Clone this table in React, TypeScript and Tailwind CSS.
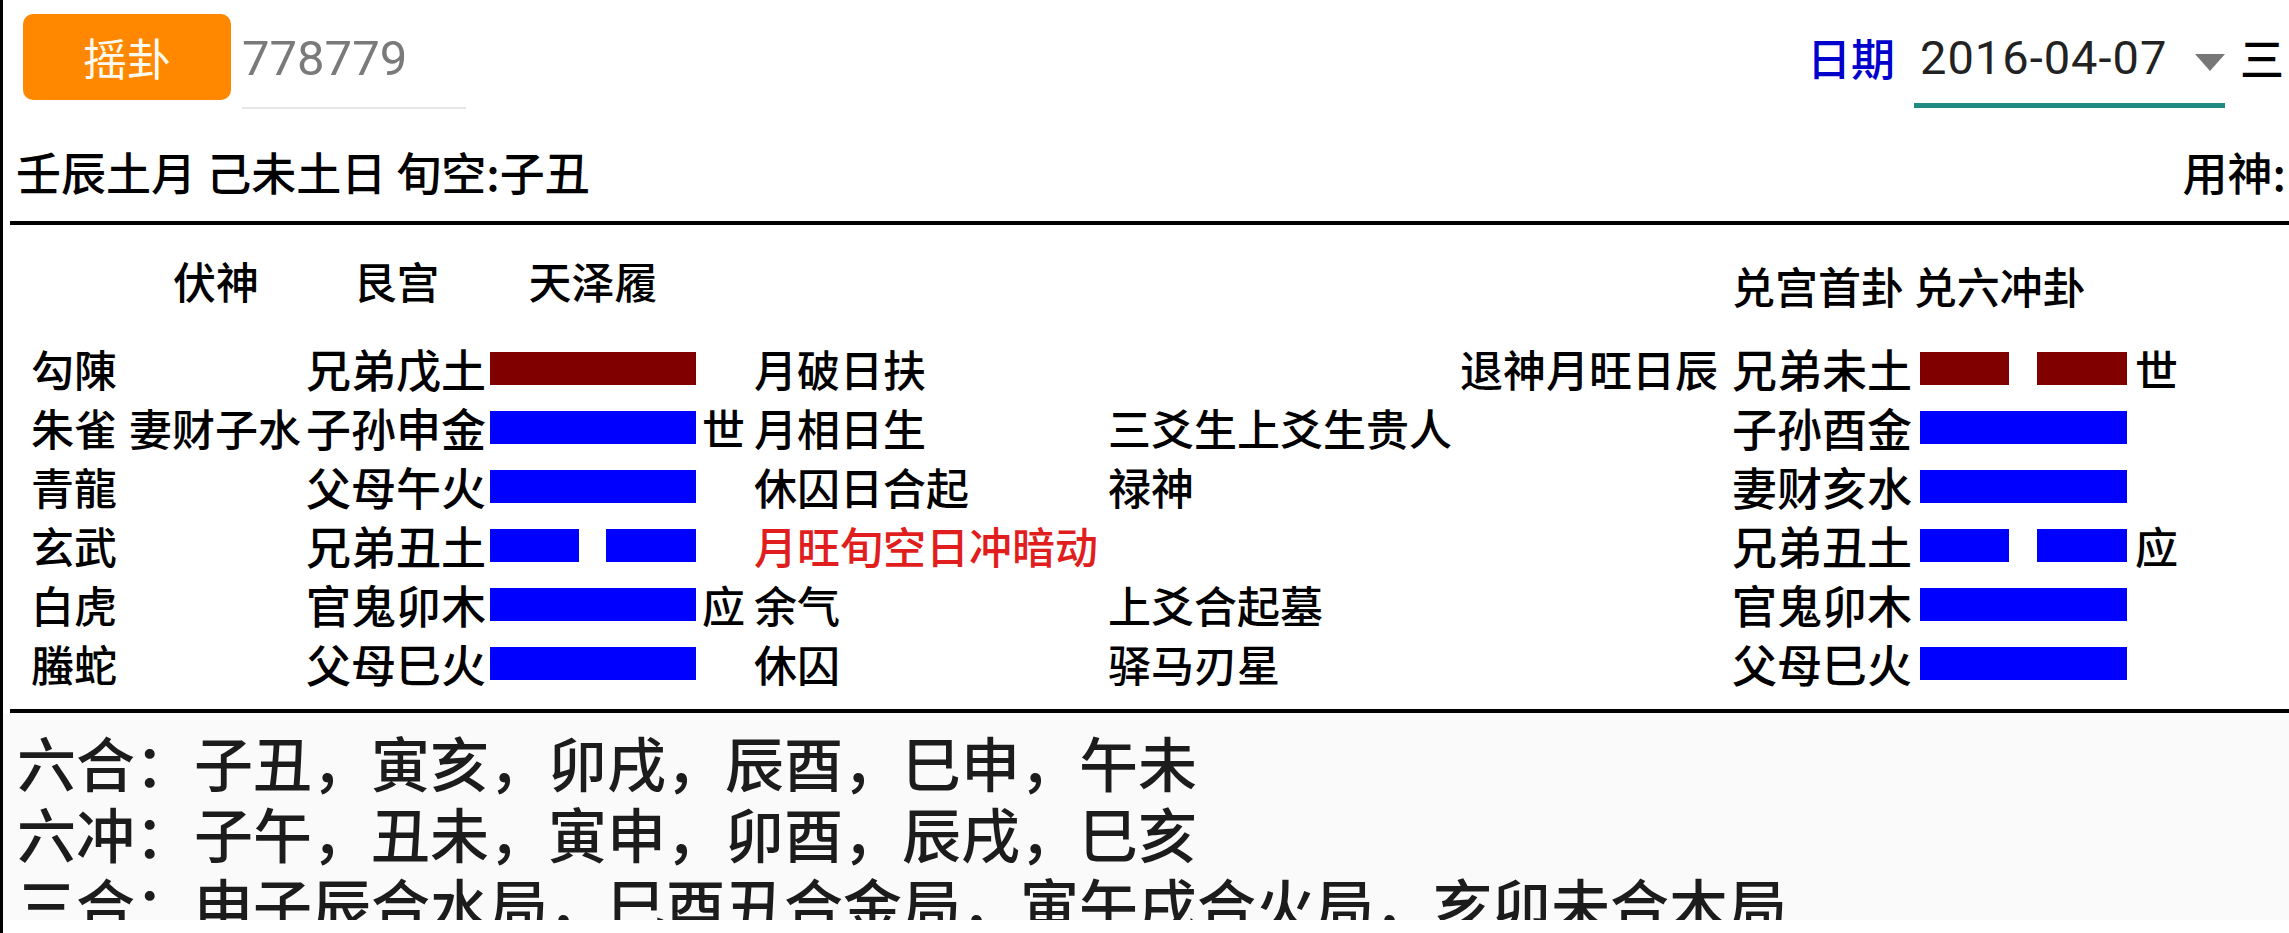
import React from 'react';

type Yao = { yang: boolean; moving: boolean };

type Row = {
  god: string;
  fu: string;
  rel: string;
  yao: Yao;
  mark: string;
  state: string;
  stateRed?: boolean;
  note: string;
  rNote: string;
  rRel: string;
  rYao: Yao;
  rMark: string;
};

const rows: Row[] = [
  {
    god: '勾陳', fu: '', rel: '兄弟戊土', yao: { yang: true, moving: true }, mark: '',
    state: '月破日扶', note: '', rNote: '退神月旺日辰', rRel: '兄弟未土',
    rYao: { yang: false, moving: true }, rMark: '世'
  },
  {
    god: '朱雀', fu: '妻财子水', rel: '子孙申金', yao: { yang: true, moving: false }, mark: '世',
    state: '月相日生', note: '三爻生上爻生贵人', rNote: '', rRel: '子孙酉金',
    rYao: { yang: true, moving: false }, rMark: ''
  },
  {
    god: '青龍', fu: '', rel: '父母午火', yao: { yang: true, moving: false }, mark: '',
    state: '休囚日合起', note: '禄神', rNote: '', rRel: '妻财亥水',
    rYao: { yang: true, moving: false }, rMark: ''
  },
  {
    god: '玄武', fu: '', rel: '兄弟丑土', yao: { yang: false, moving: false }, mark: '',
    state: '月旺旬空日冲暗动', stateRed: true, note: '', rNote: '', rRel: '兄弟丑土',
    rYao: { yang: false, moving: false }, rMark: '应'
  },
  {
    god: '白虎', fu: '', rel: '官鬼卯木', yao: { yang: true, moving: false }, mark: '应',
    state: '余气', note: '上爻合起墓', rNote: '', rRel: '官鬼卯木',
    rYao: { yang: true, moving: false }, rMark: ''
  },
  {
    god: '螣蛇', fu: '', rel: '父母巳火', yao: { yang: true, moving: false }, mark: '',
    state: '休囚', note: '驿马刃星', rNote: '', rRel: '父母巳火',
    rYao: { yang: true, moving: false }, rMark: ''
  }
];

const YaoBar: React.FC<{ yao: Yao; width: string }> = ({ yao, width }) => {
  const color = yao.moving ? 'bg-[#800000]' : 'bg-[#0000ff]';
  if (yao.yang) {
    return <div className={`h-[33px] shrink-0 ${width} ${color}`} />;
  }
  return (
    <div className={`flex h-[33px] shrink-0 justify-between ${width}`}>
      <div className={`h-full w-[89px] ${color}`} />
      <div className={`h-full w-[90px] ${color}`} />
    </div>
  );
};

const App: React.FC = () => {
  return (
    <div className="flex h-[933px] w-[2289px] flex-col overflow-hidden border-l-[3px] border-black bg-white font-['Noto_Sans_CJK_SC','Noto_Sans',sans-serif] text-black">
      {/* Top bar */}
      <div className="flex h-[142px] shrink-0 items-start pt-[14px]">
        <button className="ml-[20px] h-[86px] w-[208px] rounded-[10px] bg-[#ff8800] text-[44px] leading-none text-[#fffaf0]">
          摇卦
        </button>
        <div className="ml-[11px] flex h-[95px] w-[224px] items-center border-b-[2px] border-[#e6e6e6] pb-[4px] font-['Roboto',sans-serif] text-[49px] text-[#7a7a7a]">
          778779
        </div>

        <div className="ml-auto flex items-start pr-[5px]">
          <span className="h-[86px] text-[44px] font-medium leading-[86px] text-[#0000cc]">日期</span>
          <div className="ml-[19px] flex h-[94px] w-[311px] items-center border-b-[5px] border-[#1e8c82] pl-[6px]">
            <span className="font-['Roboto',sans-serif] text-[47px] tracking-[1px] text-[#222222]">2016-04-07</span>
            <svg className="ml-auto mt-[7px]" width="30" height="17" viewBox="0 0 30 17">
              <polygon points="0,0 30,0 15,17" fill="#777777" />
            </svg>
          </div>
          <span className="ml-[15px] h-[86px] text-[44px] font-medium leading-[86px]">三</span>
        </div>
      </div>

      {/* Day info */}
      <div className="flex h-[60px] shrink-0 items-center justify-between pl-[13px] pr-[3px] text-[45px] font-medium">
        <span>壬辰土月 己未土日 旬空:子丑</span>
        <span>用神:</span>
      </div>

      <div className="ml-[7px] mt-[19px] h-[4px] shrink-0 bg-black" />

      {/* Hexagram table */}
      <div className="shrink-0 pb-[16px] pl-[28px] pt-[26px] text-[43px] font-medium">
        <div className="mb-[29px] flex h-[59px] items-center">
          <div className="w-[98px] shrink-0" />
          <div className="w-[174px] shrink-0 text-center">伏神</div>
          <div className="w-[187px] shrink-0 text-center">艮宫</div>
          <div className="w-[206px] shrink-0 text-center">天泽履</div>
          <div className="w-[1034px] shrink-0" />
          <div className="whitespace-nowrap pl-[2px] pt-[10px]">兑宫首卦 兑六冲卦</div>
        </div>

        {rows.map((r, i) => (
          <div key={i} className="flex h-[59px] items-center whitespace-nowrap">
            <div className="w-[98px] shrink-0">{r.god}</div>
            <div className="w-[174px] shrink-0">{r.fu}</div>
            <div className="w-[187px] shrink-0 pr-[4px] text-right text-[45px]">{r.rel}</div>
            <YaoBar yao={r.yao} width="w-[206px]" />
            <div className="w-[58px] shrink-0 pl-[6px]">{r.mark}</div>
            <div className={`w-[354px] shrink-0 ${r.stateRed ? 'text-[#e01e1e]' : ''}`}>{r.state}</div>
            <div className="w-[352px] shrink-0">{r.note}</div>
            <div className="w-[270px] shrink-0 pr-[12px] text-right">{r.rNote}</div>
            <div className="w-[190px] shrink-0 pl-[2px] text-[45px]">{r.rRel}</div>
            <YaoBar yao={r.rYao} width="w-[207px]" />
            <div className="flex-1 pl-[8px]">{r.rMark}</div>
          </div>
        ))}
      </div>

      <div className="ml-[7px] h-[4px] shrink-0 bg-black" />

      {/* Reference */}
      <div className="h-[207px] shrink-0 overflow-hidden bg-[#fafafa] pl-[14px] pt-[13px] text-[59px] font-medium leading-[71px] text-[#1c1c1c]">
        <div className="h-[71px]">六合：子丑，寅亥，卯戌，辰酉，巳申，午未</div>
        <div className="h-[71px]">六冲：子午，丑未，寅申，卯酉，辰戌，巳亥</div>
        <div className="h-[71px]">三合：申子辰合水局，巳酉丑合金局，寅午戌合火局，亥卯未合木局</div>
      </div>
    </div>
  );
};

export default App;
